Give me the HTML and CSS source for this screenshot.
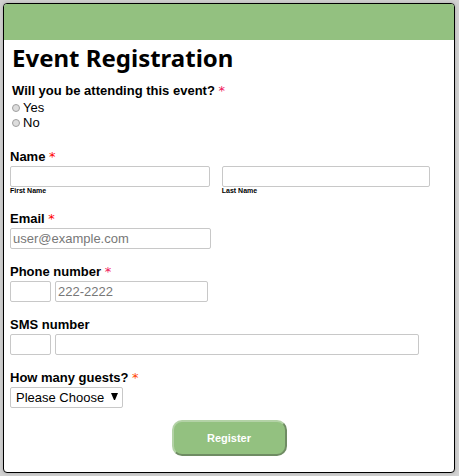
FILE: index.html
```html
<!DOCTYPE html>
<html lang="en">
<head>
<meta charset="utf-8">
<title>Event Registration</title>
<link rel="stylesheet" href="styles.css">
</head>
<body>
<main class="card">
  <div class="banner"></div>
  <form class="form">
    <h1 class="title">Event Registration</h1>
    <fieldset class="attending">
      <legend class="label">Will you be attending this event? <span class="required pink">*</span></legend>
      <label class="choice"><input class="radio" type="radio" name="attending" value="yes">Yes</label>
      <label class="choice"><input class="radio" type="radio" name="attending" value="no">No</label>
    </fieldset>
    <fieldset class="group">
      <legend class="label">Name <span class="required">*</span></legend>
      <div class="names">
        <div class="half">
          <input class="field" type="text" id="first">
          <label class="sublabel" for="first">First Name</label>
        </div>
        <div class="half last">
          <input class="field" type="text" id="last">
          <label class="sublabel" for="last">Last Name</label>
        </div>
      </div>
    </fieldset>
    <div class="group">
      <label class="label" for="email">Email <span class="required">*</span></label>
      <div class="row"><input class="field email" type="email" id="email" placeholder="user@example.com"></div>
    </div>
    <div class="group">
      <label class="label" for="phone">Phone number <span class="required pink">*</span></label>
      <div class="row">
        <input class="field area" type="tel" aria-label="Phone area code">
        <input class="field phone" type="tel" id="phone" placeholder="222-2222">
      </div>
    </div>
    <div class="group">
      <label class="label" for="sms">SMS number</label>
      <div class="row">
        <input class="field area" type="tel" aria-label="SMS area code">
        <input class="field sms" type="tel" id="sms">
      </div>
    </div>
    <div class="group">
      <label class="label" for="guests">How many guests? <span class="required orange">*</span></label>
      <div class="picker">
        <select class="field guests" id="guests"><option>Please Choose</option></select>
        <svg class="arrow" viewBox="0 0 7 7" aria-hidden="true"><path d="M0 0h7L4 7H3z"/></svg>
      </div>
    </div>
    <button class="register" type="submit">Register</button>
  </form>
</main>
</body>
</html>
```

FILE: styles.css
```css
* {
  box-sizing: border-box;
}

body {
  margin: 0;
  padding: 3px 4px 3px 3px;
  background: #d3d3d3;
  color: #000;
  font-family: "Liberation Sans", Arial, sans-serif;
  font-size: 13px;
}

.card {
  overflow: hidden;
  border: 1px solid #000;
  border-radius: 4px;
  background: #fff;
  box-shadow: 0 0 4px #aaa;
}

.banner {
  height: 36px;
  background: #93c180;
}

.form {
  padding: 0 6px 16px;
}

.title {
  margin: 0 0 8px 2px;
  font-family: "Noto Sans", Tahoma, sans-serif;
  font-size: 24px;
  line-height: 36px;
}

fieldset {
  min-width: 0;
  margin: 0;
  padding: 0;
  border: 0;
}

.attending {
  margin: 0 0 20px 2px;
}

.group {
  margin-bottom: 16px;
}

.label {
  display: block;
  height: 16px;
  padding: 0;
  font-weight: bold;
  line-height: 14px;
}

.required {
  color: #f00;
  font-family: "DejaVu Sans", sans-serif;
  font-weight: normal;
  line-height: 1;
}

.pink {
  color: #f0145a;
}

.orange {
  color: #f40;
}

.choice {
  display: flex;
  align-items: center;
  gap: 3px;
  height: 15px;
}

.radio {
  appearance: none;
  width: 8px;
  height: 8px;
  margin: 0;
  border: 1px solid #a0a0a0;
  border-radius: 50%;
  background: #ddd;
}

.radio:checked {
  background: #444;
}

.names {
  display: flex;
  gap: 12px;
  padding-right: 4%;
}

.half {
  flex: 200;
  min-width: 0;
}

.last {
  flex: 209;
}

.row {
  display: flex;
  gap: 4px;
}

.field {
  display: block;
  width: 100%;
  height: 21px;
  padding: 0 2px;
  border: 1px solid #c8c8c8;
  border-radius: 2px;
  background: #fff;
  color: #000;
  font: inherit;
}

.field::placeholder {
  color: #777;
}

.sublabel {
  display: block;
  height: 9px;
  font-size: 7px;
  font-weight: bold;
  line-height: 8px;
}

.email {
  width: 46%;
}

.area {
  flex: none;
  width: 41px;
}

.phone {
  width: 35%;
}

.sms {
  width: 83%;
}

.picker {
  position: relative;
  width: max-content;
}

.guests {
  appearance: none;
  padding: 0 17px 0 5px;
}

.arrow {
  position: absolute;
  top: 6px;
  right: 5px;
  width: 7px;
  height: 7px;
  pointer-events: none;
}

.register {
  display: block;
  width: 115px;
  height: 36px;
  margin: -4px auto 0;
  border: 2px solid;
  border-color: #b3d2a6 #6f8c63 #6f8c63 #b3d2a6;
  border-radius: 10px;
  background: #93c180;
  color: #fff;
  font: bold 11px "Liberation Sans", Arial, sans-serif;
}
```
